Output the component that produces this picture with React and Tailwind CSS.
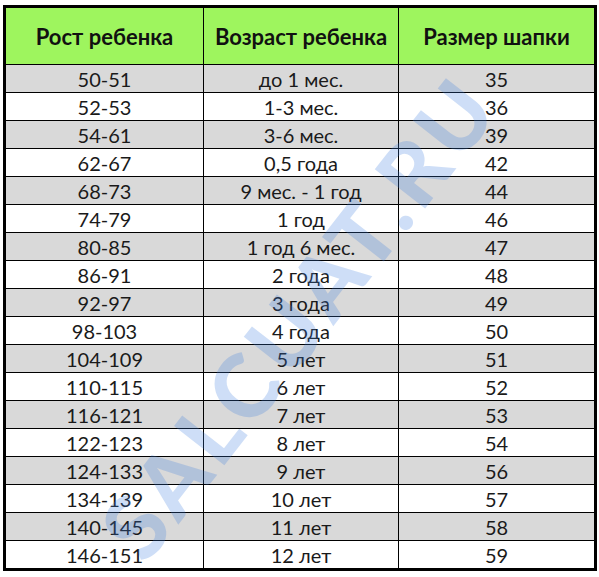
const rows = [
  ["50-51", "до 1 мес.", "35"],
  ["52-53", "1-3 мес.", "36"],
  ["54-61", "3-6 мес.", "39"],
  ["62-67", "0,5 года", "42"],
  ["68-73", "9 мес. - 1 год", "44"],
  ["74-79", "1 год", "46"],
  ["80-85", "1 год 6 мес.", "47"],
  ["86-91", "2 года", "48"],
  ["92-97", "3 года", "49"],
  ["98-103", "4 года", "50"],
  ["104-109", "5 лет", "51"],
  ["110-115", "6 лет", "52"],
  ["116-121", "7 лет", "53"],
  ["122-123", "8 лет", "54"],
  ["124-133", "9 лет", "56"],
  ["134-139", "10 лет", "57"],
  ["140-145", "11 лет", "58"],
  ["146-151", "12 лет", "59"],
];

export default function App() {
  return (
    <div className="w-[599px] h-[577px] bg-white pt-[5px] pl-[3px] overflow-hidden" style={{ fontFamily: "Lato, 'Open Sans', sans-serif" }}>
      <div className="relative w-[594px] border-[3px] border-black overflow-hidden">
        <div className="grid grid-cols-[198px_195px_1fr] h-[56px] bg-[#9ef55e] text-[22px] font-bold text-[#111]">
          <div className="flex items-center justify-center border-r border-black">Рост ребенка</div>
          <div className="flex items-center justify-center border-r border-black">Возраст ребенка</div>
          <div className="flex items-center justify-center">Размер шапки</div>
        </div>
        {rows.map((r, i) => (
          <div
            key={i}
            className={`grid grid-cols-[198px_195px_1fr] h-[28px] border-t border-black text-[20px] text-[#1a1a1a] ${i % 2 === 0 ? "bg-[#d9d9d9]" : "bg-white"}`}
          >
            <div className="flex items-center justify-center border-r border-black leading-none">{r[0]}</div>
            <div className="flex items-center justify-center border-r border-black leading-none">{r[1]}</div>
            <div className="flex items-center justify-center leading-none">{r[2]}</div>
          </div>
        ))}
        <div className="pointer-events-none absolute left-[292px] top-[308px] -translate-x-1/2 -translate-y-1/2 -rotate-[52deg] whitespace-nowrap text-[88px] font-black tracking-[6px] text-[#3f7fe0] opacity-25 leading-none">
          SALCUAT.RU
        </div>
      </div>
    </div>
  );
}
